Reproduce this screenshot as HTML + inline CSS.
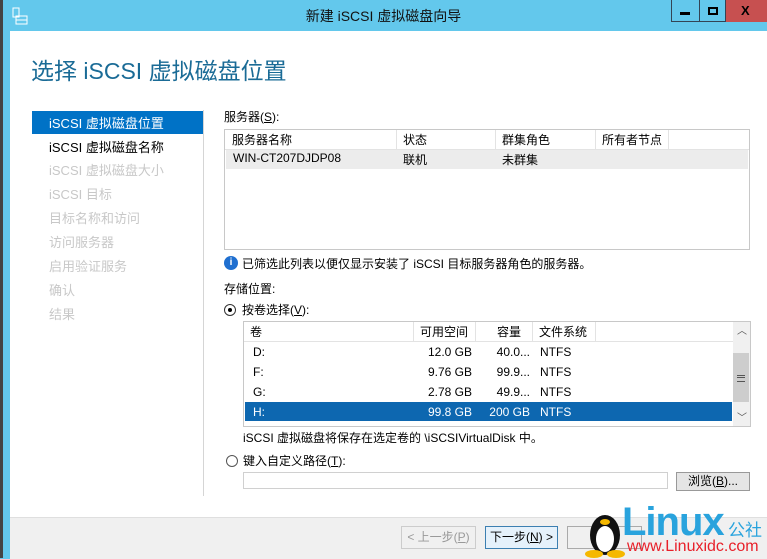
<html><head><style>
body{margin:0;width:767px;height:558px;overflow:hidden;background:#63c8ec;font-family:"Liberation Sans","Noto Sans CJK SC",sans-serif;font-size:12px;color:#000;position:relative}
.a{position:absolute}
.t{white-space:nowrap}
</style></head><body>
<div class="a" style="left:0;top:0;width:3px;height:558px;background:#444"></div>
<div class="a" style="left:10px;top:31px;width:757px;height:527px;background:#fff"></div>
<!-- title -->
<svg class="a" style="left:12px;top:7px" width="18" height="18"><rect x="1" y="1" width="6" height="9" fill="none" stroke="#fff"/><rect x="4" y="9" width="11" height="8" fill="none" stroke="#fff"/><line x1="4" y1="13" x2="15" y2="13" stroke="#fff"/></svg>
<div class="a t" style="left:0;width:767px;top:6px;text-align:center;font-size:14px;color:#111">新建 iSCSI 虚拟磁盘向导</div>
<div class="a" style="left:671px;top:0;width:29px;height:22px;border:1px solid #345;border-top:0;box-sizing:border-box"></div>
<div class="a" style="left:680px;top:12px;width:10px;height:3px;background:#000"></div>
<div class="a" style="left:699px;top:0;width:27px;height:22px;border:1px solid #345;border-top:0;box-sizing:border-box"></div>
<div class="a" style="left:708px;top:7px;width:10px;height:8px;border:2px solid #000;box-sizing:border-box"></div>
<div class="a" style="left:726px;top:0;width:41px;height:22px;background:#c75050"></div>
<div class="a t" style="left:741px;top:3px;font-size:13px;font-weight:bold">X</div>
<div class="a t" style="left:31px;top:52px;font-size:23px;color:#1a6b96">选择 iSCSI 虚拟磁盘位置</div>
<!-- nav -->
<div class="a" style="left:32px;top:111px;width:171px;height:23px;background:#0072c6"></div>
<div class="a" style="left:203px;top:110px;width:1px;height:386px;background:#d5d5d5"></div>
<div class="a t" style="left:49px;top:113px;font-size:13px;color:#fff">iSCSI 虚拟磁盘位置</div>
<div class="a t" style="left:49px;top:137px;font-size:13px">iSCSI 虚拟磁盘名称</div>
<div class="a t" style="left:49px;top:159px;font-size:13px;color:#c8c8c8;line-height:24px">iSCSI 虚拟磁盘大小<br>iSCSI 目标<br>目标名称和访问<br>访问服务器<br>启用验证服务<br>确认<br>结果</div>
<!-- servers -->
<div class="a t" style="left:224px;top:108px">服务器(<u>S</u>):</div>
<div class="a" style="left:224px;top:129px;width:526px;height:121px;border:1px solid #c8c8c8;box-sizing:border-box"></div>
<div class="a" style="left:225px;top:149px;width:524px;height:1px;background:#e3e3e3"></div>
<div class="a" style="left:396px;top:130px;width:1px;height:19px;background:#e3e3e3"></div>
<div class="a" style="left:495px;top:130px;width:1px;height:19px;background:#e3e3e3"></div>
<div class="a" style="left:595px;top:130px;width:1px;height:19px;background:#e3e3e3"></div>
<div class="a" style="left:668px;top:130px;width:1px;height:19px;background:#e3e3e3"></div>
<div class="a t" style="left:232px;top:131px">服务器名称</div>
<div class="a t" style="left:403px;top:131px">状态</div>
<div class="a t" style="left:502px;top:131px">群集角色</div>
<div class="a t" style="left:602px;top:131px">所有者节点</div>
<div class="a" style="left:226px;top:150px;width:522px;height:19px;background:#ececec"></div>
<div class="a t" style="left:233px;top:151px">WIN-CT207DJDP08</div>
<div class="a t" style="left:403px;top:151px">联机</div>
<div class="a t" style="left:502px;top:151px">未群集</div>
<div class="a" style="left:224px;top:256px;width:14px;height:14px;border-radius:50%;background:#1f6fd0;color:#fff;font-size:10px;font-weight:bold;text-align:center;line-height:14px">i</div>
<div class="a t" style="left:242px;top:255px">已筛选此列表以便仅显示安装了 iSCSI 目标服务器角色的服务器。</div>
<div class="a t" style="left:224px;top:280px">存储位置:</div>
<div class="a" style="left:224px;top:304px;width:12px;height:12px;border:1px solid #333;border-radius:50%;box-sizing:border-box"></div>
<div class="a" style="left:228px;top:308px;width:4px;height:4px;background:#000;border-radius:50%"></div>
<div class="a t" style="left:242px;top:301px">按卷选择(<u>V</u>):</div>
<!-- volumes -->
<div class="a" style="left:243px;top:321px;width:508px;height:106px;border:1px solid #c8c8c8;box-sizing:border-box"></div>
<div class="a" style="left:244px;top:341px;width:489px;height:1px;background:#e3e3e3"></div>
<div class="a" style="left:413px;top:322px;width:1px;height:19px;background:#e3e3e3"></div>
<div class="a" style="left:475px;top:322px;width:1px;height:19px;background:#e3e3e3"></div>
<div class="a" style="left:532px;top:322px;width:1px;height:19px;background:#e3e3e3"></div>
<div class="a" style="left:595px;top:322px;width:1px;height:19px;background:#e3e3e3"></div>
<div class="a t" style="left:250px;top:323px">卷</div>
<div class="a t" style="left:420px;top:323px">可用空间</div>
<div class="a t" style="left:497px;top:323px">容量</div>
<div class="a t" style="left:539px;top:323px">文件系统</div>
<div class="a" style="left:245px;top:402px;width:487px;height:19px;background:#0d67b0"></div>
<div class="a t" style="left:253px;top:342px;line-height:20px">D:<br>F:<br>G:<br><span style="color:#fff">H:</span></div>
<div class="a t" style="left:410px;width:62px;text-align:right;top:342px;line-height:20px">12.0 GB<br>9.76 GB<br>2.78 GB<br><span style="color:#fff">99.8 GB</span></div>
<div class="a t" style="left:480px;width:50px;text-align:right;top:342px;line-height:20px">40.0...<br>99.9...<br>49.9...<br><span style="color:#fff">200 GB</span></div>
<div class="a t" style="left:540px;top:342px;line-height:20px">NTFS<br>NTFS<br>NTFS<br><span style="color:#fff">NTFS</span></div>
<div class="a" style="left:733px;top:322px;width:17px;height:104px;background:#f0f0f0"></div>
<div class="a" style="left:733px;top:353px;width:16px;height:49px;background:#cdcdcd"></div>
<div class="a t" style="left:737px;top:322px;font-size:10px;color:#555">︿</div>
<div class="a t" style="left:737px;top:409px;font-size:10px;color:#555">﹀</div>
<div class="a" style="left:737px;top:375px;width:8px;height:5px;border-top:1px solid #555;border-bottom:1px solid #555"></div>
<div class="a" style="left:737px;top:377px;width:8px;height:1px;background:#555"></div>
<div class="a t" style="left:243px;top:429px">iSCSI 虚拟磁盘将保存在选定卷的 \iSCSIVirtualDisk 中。</div>
<div class="a" style="left:226px;top:455px;width:12px;height:12px;border:1px solid #555;border-radius:50%;box-sizing:border-box"></div>
<div class="a t" style="left:243px;top:452px">键入自定义路径(<u>T</u>):</div>
<div class="a" style="left:243px;top:472px;width:425px;height:17px;border:1px solid #d0d0d0;box-sizing:border-box"></div>
<div class="a" style="left:676px;top:472px;width:74px;height:19px;border:1px solid #999;background:#e5e5e5;box-sizing:border-box;text-align:center;line-height:17px">浏览(<u>B</u>)...</div>
<!-- footer -->
<div class="a" style="left:10px;top:517px;width:757px;height:41px;background:#f0f0f0;border-top:1px solid #dfdfdf"></div>
<div class="a" style="left:401px;top:526px;width:75px;height:23px;border:1px solid #ccc;box-sizing:border-box;text-align:center;line-height:21px;color:#999">&lt; 上一步(<u>P</u>)</div>
<div class="a" style="left:485px;top:526px;width:73px;height:23px;border:1px solid #3c7fb1;background:#e5f1fb;box-sizing:border-box;text-align:center;line-height:21px">下一步(<u>N</u>) &gt;</div>
<div class="a" style="left:567px;top:526px;width:75px;height:23px;border:1px solid #aaa;box-sizing:border-box"></div>
<!-- watermark -->
<svg class="a" style="left:585px;top:505px" width="40" height="53"><ellipse cx="20" cy="30" rx="15" ry="20" fill="#111"/><ellipse cx="20" cy="34" rx="9" ry="13" fill="#fff"/><ellipse cx="20" cy="17" rx="5" ry="3" fill="#f5b800"/><ellipse cx="9" cy="49" rx="9" ry="4" fill="#f5b800"/><ellipse cx="31" cy="49" rx="9" ry="4" fill="#f5b800"/></svg>
<div class="a t" style="left:622px;top:500px;font-size:40px;font-weight:bold;color:#29a3dd;letter-spacing:-1px">Linux</div>
<div class="a t" style="left:728px;top:516px;font-size:17px;color:#29a3dd">公社</div>
<div class="a t" style="left:627px;top:538px;font-size:16px;color:#e8202a">www.Linuxidc.com</div>
</body></html>
